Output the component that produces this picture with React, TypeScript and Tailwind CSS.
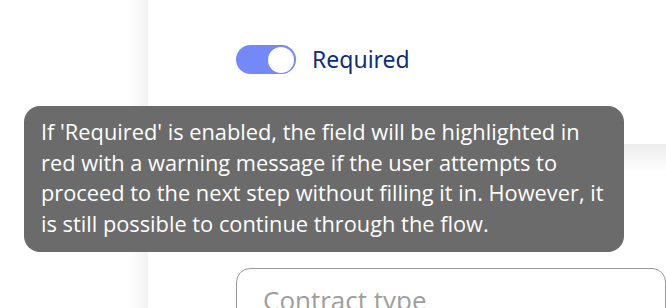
import React from 'react';

const Toggle: React.FC = () => (
  <div className="flex h-[29px] w-[60px] items-center justify-end rounded-full bg-[#7488f8] px-[2px]">
    <div className="h-[26px] w-[26px] rounded-full bg-white" />
  </div>
);

export default function App() {
  return (
    <div className="relative h-[308px] w-[666px] overflow-hidden bg-white">
      <div className="flex h-full">
        <div className="w-[128px] shrink-0 bg-white" />
        {/* side shadow */}
        <div className="w-[20px] shrink-0 bg-gradient-to-r from-white to-[#f3f3f3]" />

        <div className="flex flex-1 flex-col bg-white pt-[45px]">
          <div className="ml-[88px] flex shrink-0 items-center gap-[16px]">
            <Toggle />
            <span className="font-['Noto_Sans',sans-serif] text-[23px] leading-none text-[#0f2e78]">Required</span>
          </div>

          {/* header shadow band */}
          <div className="mt-[70px] h-[28px] shrink-0 bg-gradient-to-b from-[#ececec] to-white" />

          <div className="ml-[88px] mt-[96px] h-[80px] shrink-0 rounded-[14px] border-[1.5px] border-[#9a9a9a] pl-[26px] pt-[18px]">
            <span className="font-['Open_Sans',sans-serif] text-[26px] leading-none text-[#9e9e9e]">Contract type</span>
          </div>
        </div>
      </div>

      {/* tooltip */}
      <div className="absolute left-[24px] top-[106px] w-[600px] rounded-[16px] bg-[#6b6b6b] pb-[12px] pl-[17px] pr-[6px] pt-[11px] font-['Open_Sans',sans-serif] text-[21.8px] leading-[30.7px] text-white">
        If 'Required' is enabled, the field will be highlighted in red with a warning message if the user attempts to proceed to the next step without filling it in. However, it is still possible to continue through the flow.
      </div>
    </div>
  );
}
